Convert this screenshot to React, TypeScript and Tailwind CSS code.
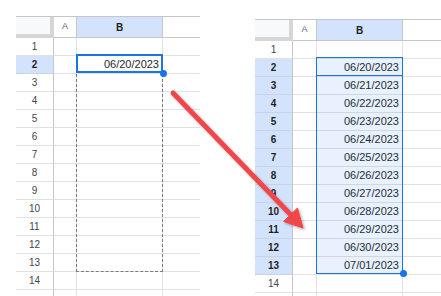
const ROWS = Array.from({ length: 15 }, (_, i) => i + 1);

const dateFor = (row: number) => {
  const d = new Date(2023, 5, 20 + row - 2);
  const mm = String(d.getMonth() + 1).padStart(2, "0");
  const dd = String(d.getDate()).padStart(2, "0");
  return `${mm}/${dd}/${d.getFullYear()}`;
};

type SheetProps = {
  gridClass: string;
  activeRows: number[];
  values: Record<number, string>;
  children?: React.ReactNode;
};

const Sheet = ({ gridClass, activeRows, values, children }: SheetProps) => {
  return (
    <div className="relative">
      <div className={`grid ${gridClass} border-t border-[#c4c7c5]`}>
        {/* header row */}
        <div className="h-[21px] bg-[#f8f9fa] border-r-4 border-b-4 border-[#d6d6d6]" />
        <div className="h-[21px] flex items-center justify-center bg-white border-r border-b border-[#c4c7c5] text-[9px] text-[#5f6368]">
          A
        </div>
        <div className="h-[21px] flex items-center justify-center bg-[#d3e3fd] border-r border-b border-[#c4c7c5] text-[10px] font-bold text-[#1f1f1f]">
          B
        </div>
        <div className="h-[21px] bg-white border-b border-[#c4c7c5]" />

        {ROWS.map((r) => {
          const on = activeRows.includes(r);
          // last row only peeks in under the bottom edge, its number is hidden
          const label = r < 15 ? r : "";
          return (
            <div key={r} className="contents">
              <div
                className={
                  on
                    ? "h-[18px] flex items-center justify-center bg-[#d3e3fd] border-r border-b border-r-[#c4c7c5] border-b-[#c9d3e3] text-[10px] font-bold text-[#1f1f1f]"
                    : "h-[18px] flex items-center justify-center bg-white border-r border-b border-r-[#c4c7c5] border-b-[#e1e1e1] text-[10px] text-[#444746]"
                }
              >
                {label}
              </div>
              <div className="h-[18px] border-r border-b border-[#e1e1e1]" />
              <div className="h-[18px] flex items-center justify-end pr-[3px] border-r border-b border-[#e1e1e1] text-[11px] text-[#1f1f1f]">
                {values[r] ?? ""}
              </div>
              <div className="h-[18px] border-b border-[#e1e1e1]" />
            </div>
          );
        })}
      </div>
      {children}
    </div>
  );
};

const Arrow = () => (
  <svg className="absolute inset-0 pointer-events-none" width="441" height="296" viewBox="0 0 441 296">
    <defs>
      <filter id="shadow" x="-20%" y="-20%" width="140%" height="140%">
        <feDropShadow dx="1.5" dy="1.5" stdDeviation="1.2" floodColor="#000" floodOpacity="0.3" />
      </filter>
    </defs>
    <g filter="url(#shadow)" fill="#f0474b" stroke="#f0474b">
      <line x1="173" y1="93" x2="291" y2="215" strokeWidth="5" strokeLinecap="round" />
      <polygon points="303,228 283.5,221.5 297.5,208" strokeWidth="1" strokeLinejoin="round" />
    </g>
  </svg>
);

export default function App() {
  const rightValues: Record<number, string> = {};
  for (let r = 2; r <= 13; r++) rightValues[r] = dateFor(r);

  return (
    <div
      className="relative w-[441px] h-[296px] overflow-hidden bg-white flex items-start pl-[16px] pt-[16px]"
      style={{ fontFamily: '"Liberation Sans", Arial, sans-serif' }}
    >
      <div className="w-[184px] shrink-0">
        <Sheet gridClass="grid-cols-[38px_23px_86px_37px]" activeRows={[2]} values={{ 2: "06/20/2023" }}>
          <div className="absolute left-[60px] top-[38px] w-[87px] h-[218px] border border-dashed border-[#7b7b7b]" />
          <div className="absolute left-[60px] top-[38px] w-[87px] h-[19px] border-2 border-[#1a73e8]" />
          <div className="absolute left-[144px] top-[54px] w-[7px] h-[7px] rounded-full bg-[#1a73e8]" />
        </Sheet>
      </div>

      <div className="w-[186px] shrink-0 ml-[55px] mt-[3px]">
        <Sheet gridClass="grid-cols-[38px_24px_86px_38px]" activeRows={[2, 3, 4, 5, 6, 7, 8, 9, 10, 11, 12, 13]} values={rightValues}>
          <div className="absolute left-[61px] top-[38px] w-[87px] h-[217px] border border-[#1a73e8] bg-[#1a73e8]/10" />
          <div className="absolute left-[61px] top-[38px] w-[87px] h-[19px] border border-[#1a73e8]" />
          <div className="absolute left-[145px] top-[251px] w-[7px] h-[7px] rounded-full bg-[#1a73e8]" />
        </Sheet>
      </div>

      <Arrow />
    </div>
  );
}
